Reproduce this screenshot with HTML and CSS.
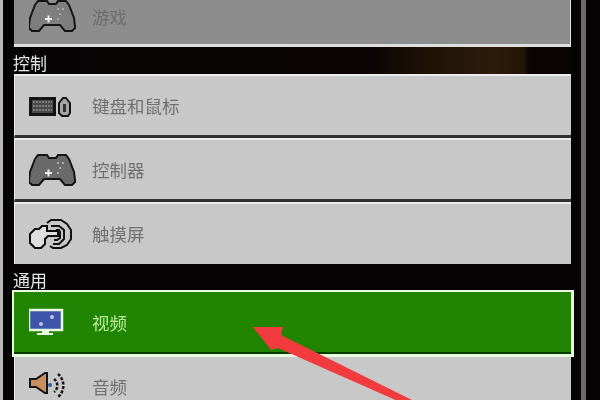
FILE: index.html
```html
<!DOCTYPE html>
<html lang="zh">
<head>
<meta charset="utf-8">
<title>设置</title>
<link rel="stylesheet" href="styles.css">
</head>
<body>
<div class="screen">
  <div class="edge"></div>
  <main class="list">
    <div class="row row-game">
      <svg class="icon" viewBox="0 0 48 32"><path class="pad" d="M9 1h9l2 3h7l2-3h8l3 4 5 13 1 8v2l-3 3h-7l-5-6H15l-5 6H3l-3-3v-2l1-8 5-13z"/><path class="spark" d="M16 18h7v2h-7zM18.500 15.500h2v7h-2z"/><path class="dots" d="M28 8h2v2h-2zM33 8h2v2h-2zM30 13h2v2h-2zM28 18h2v2h-2z"/></svg>
      <span>游戏</span>
    </div>
    <div class="section section-brown">控制</div>
    <div class="row">
      <svg class="icon" viewBox="0 0 48 32"><rect class="kbd" x="1.500" y="8.500" width="24" height="16"/><path class="keys" d="M4 12h19M4 16h19M4 20h19"/><path class="mouse" d="M30 13l4-5h3l4 5v10l-2 3h-6l-3-3z"/><path class="mouse-in" d="M34 14h3v8h-3z"/></svg>
      <span>键盘和鼠标</span>
    </div>
    <div class="row">
      <svg class="icon" viewBox="0 0 48 32"><path class="pad" d="M9 1h9l2 3h7l2-3h8l3 4 5 13 1 8v2l-3 3h-7l-5-6H15l-5 6H3l-3-3v-2l1-8 5-13z"/><path class="spark" d="M16 18h7v2h-7zM18.500 15.500h2v7h-2z"/><path class="dots" d="M28 8h2v2h-2zM33 8h2v2h-2zM30 13h2v2h-2zM28 18h2v2h-2z"/></svg>
      <span>控制器</span>
    </div>
    <div class="row row-last">
      <svg class="icon" viewBox="0 0 48 32"><path class="ring" d="M18 5l4-3h10l6 4 4 6v9l-4 6-6 3h-8l-3-2"/><path class="ring" d="M22 8h8l5 4v9l-5 5h-6"/><path class="ring" d="M27 12h3l1 2v6l-3 2h-3"/><path class="hand" d="M1 16l5-5h4l3-3h5v5h11v5H19l-3 3v5l-4 4H6l-5-5z"/></svg>
      <span>触摸屏</span>
    </div>
    <div class="section section-general">通用</div>
    <div class="row selected">
      <svg class="icon" viewBox="0 0 48 32"><rect class="screen-frame" x="0" y="3" width="33" height="20"/><circle class="screen-dot" cx="23" cy="10" r="2"/><circle class="screen-dot" cx="12" cy="17" r="2"/><path class="stand" d="M13 24h7v2h4v2H8v-2h5z"/></svg>
      <span>视频</span>
    </div>
    <div class="row">
      <svg class="icon" viewBox="0 0 48 32"><path class="cone" d="M1 8h6l9-6h2v20h-2l-9-6H1z"/><circle class="cone-dot" cx="21" cy="14" r="2"/><path class="wave" d="M25 8a8 8 0 0 1 0 13M29 3a15 15 0 0 1 0 23"/></svg>
      <span>音频</span>
    </div>
  </main>
  <div class="track"></div>
  <svg class="arrow" viewBox="0 0 600 400"><path d="M253 327h30l-2 8 135 67h-16l-122-54-7 2z"/></svg>
</div>
</body>
</html>
```
FILE: styles.css
```css
html, body { margin: 0; padding: 0; background: #060304; }
.screen {
  position: relative;
  display: flex;
  width: 600px;
  height: 400px;
  overflow: hidden;
  background: #060304;
  font-family: "Noto Sans CJK SC", "Noto Sans", sans-serif;
  filter: blur(0.5px);
}
.edge { width: 3px; flex: none; background: #b9b9b9; }
.list { width: 557px; margin-left: 11px; flex: none; display: flex; flex-direction: column; }
.row {
  flex: none;
  height: 59px;
  display: flex;
  align-items: center;
  background: #c8c8c8;
  border-top: 2px solid #ececec;
  border-left: 1px solid #ececec;
  border-bottom: 3px solid #303030;
  color: #707070;
  font-size: 17.5px;
}
.row span { line-height: 1; }
.row-game {
  height: 44px;
  background: #8d8d8d;
  border-top: 0;
  border-left: 0;
  border-right: 1px solid #e4e4e4;
  border-bottom: 3px solid #dfdfdf;
  color: #6c6c6c;
  align-items: flex-start;
}
.row-game span { margin-top: 8px; }
.row-last { height: 60px; border-bottom: 0; }
.section {
  height: 27px;
  flex: none;
  color: #e6e6e6;
  font-size: 17px;
  line-height: 32px;
  margin-left: -1px;
}
.section-general { height: 26px; }
.section-brown {
  background: linear-gradient(90deg, #060304 0, #0a0404 64%, #1e1206 74%, #2c1c0a 86%, #241607 91.500%, #0a0404 92.500%);
}
.selected {
  height: 62px;
  margin: 0 -3px 3px -2px;
  background: #218402;
  border: 2px solid #e6fbdf;
  border-right-width: 3px;
  border-bottom: 0;
  box-shadow: inset 0 -2px 0 #053d00, 0 3px 0 #e6fbdf;
  color: #b7ec9c;
}
.selected + .row { height: 60px; border-top: 0; }
.icon { width: 48px; height: 32px; flex: none; margin: 0 15px 0 14px; }
.row-game .icon { margin-left: 15px; }
.selected .icon { margin-left: 15px; }
.pad { fill: #6a6a6a; stroke: #151515; stroke-width: 2; }
.row-game .pad { fill: #7e7e7e; }
.spark { fill: #ececec; }
.dots { fill: #aaa; }
.kbd { fill: #4a4a4a; stroke: #141414; stroke-width: 3; }
.keys { fill: none; stroke: #7c7c7c; stroke-width: 2; stroke-dasharray: 2 1; }
.mouse { fill: #a5a5a5; stroke: #141414; stroke-width: 2; }
.mouse-in { fill: #333; }
.hand { fill: #dedede; stroke: #0d0d0d; stroke-width: 2; }
.ring { fill: none; stroke: #111; stroke-width: 2; }
.screen-frame { fill: #3e55aa; stroke: #e6fbdf; stroke-width: 2.500; }
.screen-dot { fill: #b9c6f0; }
.stand { fill: #e6fbdf; }
.cone { fill: #c9905e; stroke: #151515; stroke-width: 2; }
.cone-dot { fill: #2f5f9e; }
.wave { fill: none; stroke: #151515; stroke-width: 2.500; stroke-dasharray: 3 1.500; }
.track { width: 5px; flex: none; margin-left: 10px; background: #6a6a6a; }
.arrow { position: absolute; inset: 0; width: 600px; height: 400px; }
.arrow path { fill: #f23b3e; }
```
